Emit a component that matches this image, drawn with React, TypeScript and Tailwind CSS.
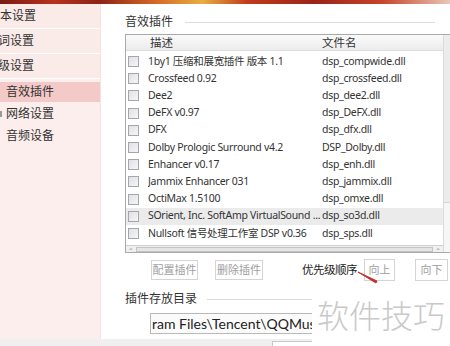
import React from "react";

// Plugin rows shown in the list
const plugins: { name: string; file: string; selected?: boolean }[] = [
  { name: "1by1 压缩和展宽插件 版本 1.1", file: "dsp_compwide.dll" },
  { name: "Crossfeed 0.92", file: "dsp_crossfeed.dll" },
  { name: "Dee2", file: "dsp_dee2.dll" },
  { name: "DeFX v0.97", file: "dsp_DeFX.dll" },
  { name: "DFX", file: "dsp_dfx.dll" },
  { name: "Dolby Prologic Surround v4.2", file: "DSP_Dolby.dll" },
  { name: "Enhancer v0.17", file: "dsp_enh.dll" },
  { name: "Jammix Enhancer 031", file: "dsp_jammix.dll" },
  { name: "OctiMax 1.5100", file: "dsp_omxe.dll" },
  { name: "SOrient, Inc. SoftAmp VirtualSound ...", file: "dsp_so3d.dll", selected: true },
  { name: "Nullsoft 信号处理工作室 DSP v0.36", file: "dsp_sps.dll" },
  { name: "Winamp 混响插件 v1.0", file: "dsp_reverb.dll" },
];

const font = "font-['Noto_Sans','Noto_Sans_CJK_SC',sans-serif]";

// Sidebar entry
const NavGroup: React.FC<{ label: string; shift: string }> = ({ label, shift }) => (
  <div className="h-[25px] flex items-center border-b border-white bg-[#faeae8] overflow-hidden whitespace-nowrap">
    <span className={shift}>{label}</span>
  </div>
);

const NavItem: React.FC<{ label: string; active?: boolean; mark?: boolean }> = ({
  label,
  active,
  mark,
}) => (
  <div
    className={`relative h-[20px] mb-[2px] flex items-center pl-[6px] ${
      active ? "bg-[#f3cac7]" : ""
    }`}
  >
    {mark && <span className="absolute left-0 top-[7px] w-[2px] h-[6px] bg-[#9a9a9a]" />}
    {label}
  </div>
);

const Checkbox: React.FC = () => (
  <span className="w-[11px] h-[11px] shrink-0 border border-[#a6a6a6] bg-gradient-to-br from-[#dfe2e6] to-[#f4f5f7]" />
);

const Btn: React.FC<{ label: string; className?: string }> = ({ label, className }) => (
  <div
    className={`flex items-center justify-center whitespace-nowrap border border-[#d4d4d4] bg-white text-[11px] text-[#a0a0a0] ${className ?? ""}`}
  >
    {label}
  </div>
);

export default function App() {
  return (
    <div className={`relative w-[450px] h-[346px] overflow-hidden bg-white text-[#333] text-[12px] ${font}`}>
      {/* skin banner strip */}
      <div className="h-[4px] bg-[linear-gradient(90deg,#7a1a14_0%,#b8321e_12%,#8c2216_22%,#d86a28_35%,#e6b040_45%,#c03a1c_55%,#9a2418_70%,#c8442a_85%,#e8c8b8_100%)]" />

      <div className="flex h-[335px]">
        {/* sidebar */}
        <div className="w-[101px] shrink-0 bg-[#fbeeec] border-r border-[#f4e2e0]">
          <NavGroup label="基本设置" shift="-ml-[12px]" />
          <NavGroup label="歌词设置" shift="-ml-[14px]" />
          <NavGroup label="高级设置" shift="-ml-[14px]" />
          <div className="pt-[3px]">
            <NavItem label="音效插件" active />
            <NavItem label="网络设置" mark />
            <NavItem label="音频设备" />
          </div>
        </div>

        {/* main panel */}
        <div className="flex-1 pl-[24px] pt-[9px]">
          <div className="flex items-center h-[18px]">
            <span>音效插件</span>
            <span className="ml-[12px] w-[250px] h-px bg-[#dcdcdc]" />
          </div>

          {/* plugin list */}
          <div className="mt-[3px] w-[335px] h-[219px] border border-[#a9a9a9] flex overflow-hidden">
            <div className="w-[317px] shrink-0 flex flex-col">
              <div className="h-[16px] flex items-center bg-gradient-to-b from-[#fafafa] to-[#ececec] border-b border-[#dedede] text-[11.5px]">
                <span className="ml-[24px] w-[172px]">描述</span>
                <span>文件名</span>
              </div>
              <div className="h-[195px] pt-[2px] overflow-hidden">
                {plugins.map((p) => (
                  <div
                    key={p.file}
                    className={`h-[17.2px] flex items-center text-[10.5px] tracking-[-0.3px] whitespace-nowrap ${
                      p.selected ? "bg-[#ebebeb]" : ""
                    }`}
                  >
                    <span className="ml-[2px] mr-[9px] flex">
                      <Checkbox />
                    </span>
                    <span className="w-[174px] overflow-hidden">{p.name}</span>
                    <span>{p.file}</span>
                  </div>
                ))}
              </div>
              {/* horizontal scrollbar */}
              <div className="h-[7px] flex items-center bg-[#f0f0f0] border-t border-[#d0d0d0]">
                <span className="w-[10px] text-[6px] leading-none text-[#666] text-center">&lt;</span>
                <span className="flex-1 h-[5px] bg-[#e4e4e4] border border-[#c4c4c4]" />
                <span className="w-[10px] text-[6px] leading-none text-[#666] text-center">&gt;</span>
              </div>
            </div>
            {/* vertical scrollbar */}
            <div className="flex-1 bg-[#f6f6f6] border-l border-[#dadada] flex flex-col">
              <span className="h-[168px] bg-[#ececec] border-b border-[#d6d6d6]" />
            </div>
          </div>

          {/* action buttons */}
          <div className="mt-[6px] h-[22px] flex items-center">
            <Btn label="配置插件" className="ml-[26px] w-[47px] h-[20px]" />
            <Btn label="删除插件" className="ml-[17px] w-[48px] h-[20px]" />
            <span className="ml-[39px] text-[#222] text-[11.5px] tracking-[-0.5px] whitespace-nowrap">优先级顺序</span>
            <span className="relative">
              <svg className="absolute left-0 top-[1px]" width="24" height="14" viewBox="0 0 24 14">
                <path d="M1 1 L20 10 L19 12 Z" fill="#c8302a" stroke="#c8302a" strokeWidth="1" />
              </svg>
            </span>
            <Btn label="向上" className="ml-[7px] w-[31px] h-[22px] text-[#9a9a9a]" />
            <Btn label="向下" className="ml-[20px] w-[33px] h-[22px] text-[#9a9a9a]" />
          </div>

          {/* plugin folder */}
          <div className="mt-[9px] flex items-center h-[18px]">
            <span>插件存放目录</span>
            <span className="ml-[10px] w-[110px] h-px bg-[#dcdcdc]" />
          </div>
          <div className="mt-[5px] ml-[25px] w-[200px] h-[21px] border border-[#b9b9b9] bg-[#fbfbfb] flex items-center overflow-hidden whitespace-nowrap text-[14px] text-[#222] font-['Lato',sans-serif]">
            <span className="ml-[1px]">ram Files\Tencent\QQMusic\Plugins</span>
          </div>
        </div>
      </div>

      {/* bottom strip */}
      <div className="h-[7px] bg-[#f0f0f0] flex">
        <span className="ml-[272px] mt-[2px] w-[40px] h-[5px] border-t border-l border-[#c8c8c8] bg-white" />
      </div>

      {/* watermark */}
      <div className="absolute left-[312px] top-[287px] w-[138px] h-[59px] bg-white flex justify-center pt-[11px]">
        <span className="text-[32px] leading-none text-[#c9c9c9] font-light font-['Noto_Sans_CJK_SC',sans-serif]">
          软件技巧
        </span>
      </div>
    </div>
  );
}
